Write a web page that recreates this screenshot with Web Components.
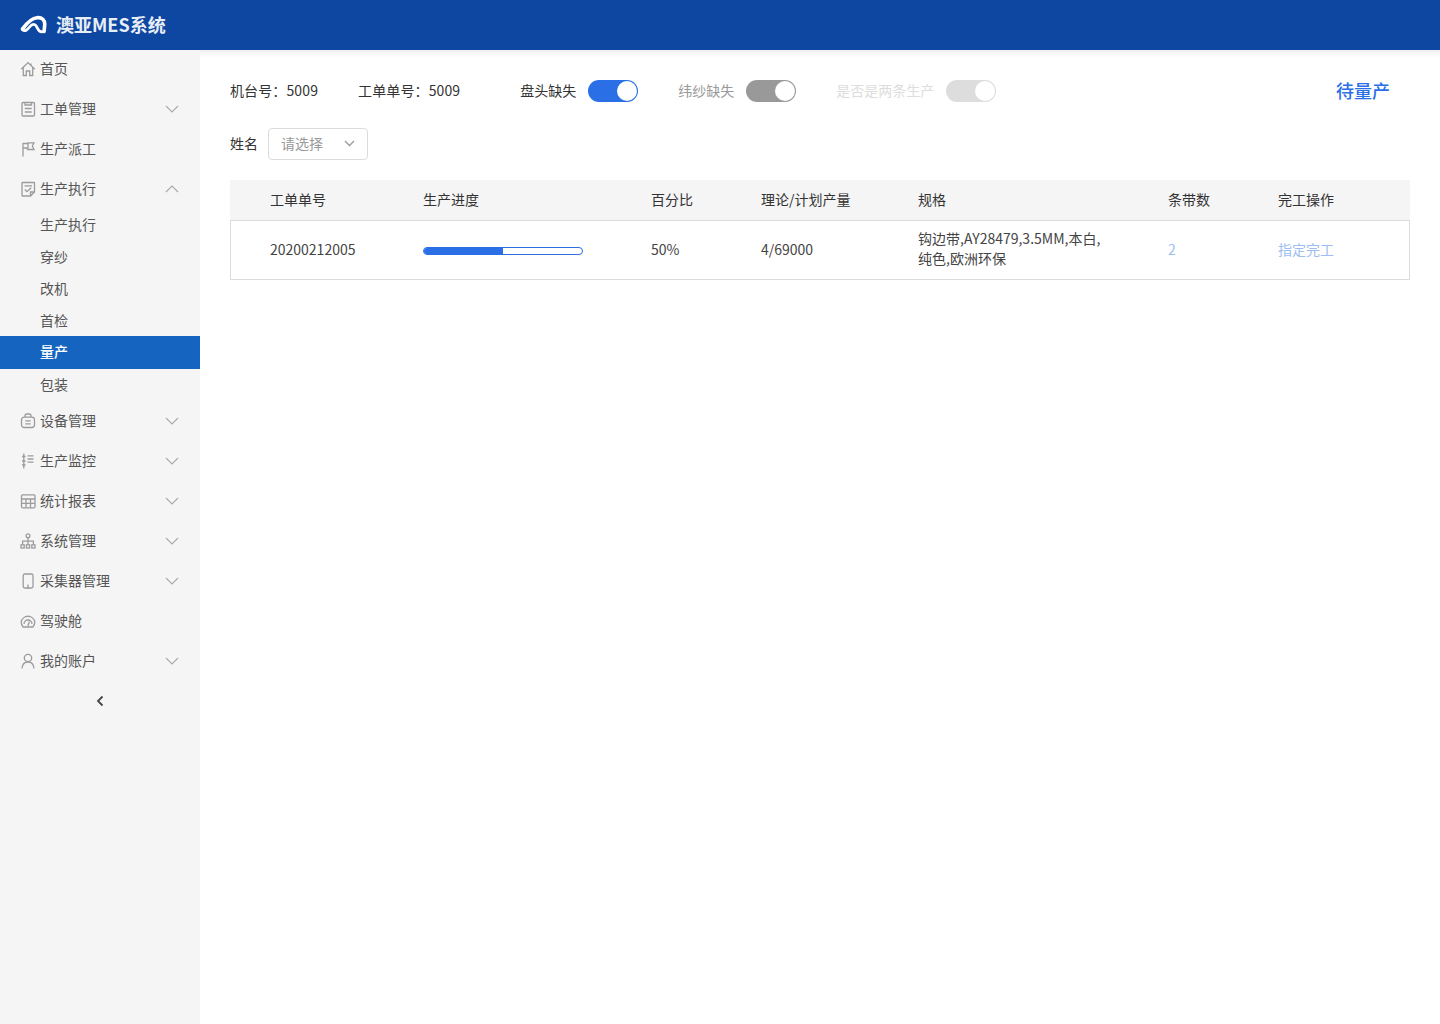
<!DOCTYPE html>
<html lang="zh">
<head>
<meta charset="utf-8">
<title>澳亚MES系统</title>
<style>
  html, body { margin: 0; height: 100%; }
  body { font-family: "Noto Sans CJK SC", "Noto Sans", sans-serif; font-size: 14px; color: #333; background: #fff; }
</style>
</head>
<body>
<mes-app>
  <mes-header slot="header"></mes-header>
  <mes-sidebar slot="sidebar"></mes-sidebar>
  <mes-toolbar></mes-toolbar>
  <mes-name-filter></mes-name-filter>
  <mes-table></mes-table>
</mes-app>

<script>
const ICONS = {
  home: '<path d="M1.2 8.2 8 1.600 14.800 8.200"/><path d="M11 2.500V4.200M3.300 6.500V14.500H6.300V10H9.700V14.500H12.700V6.500"/>',
  order: '<rect x="2" y="1.500" width="12.500" height="13.500" rx="1"/><path d="M5 1.500V4H11.500V1.500M4.800 7.500H11.700M4.800 11H11.700"/>',
  flag: '<path d="M3 15.500V2"/><path d="M3 2.500H8V1.800H14L12.300 5L14 8.500H7.500V7H3"/><path d="M8 2.500V7"/>',
  exec: '<path d="M10.500 15H2.500A.5.5 0 0 1 2 14.500V2A.5.5 0 0 1 2.500 1.500H14A.5.5 0 0 1 14.500 2V11L10.500 15ZM14.500 11H10.500V15"/><path d="M4.500 4.800H12M4.800 8.500L7 10.700L11.200 6.800"/>',
  device: '<rect x="1.500" y="4.200" width="13" height="10.300" rx="2.800"/><path d="M5 4.200V2.800C5 1.800 5.800 1 6.600 1H9.400C10.200 1 11 1.800 11 2.800V4.200M5.300 7.800H10.700M5.300 10.800H10.700"/>',
  monitor: '<path d="M3.800 .5V15.500M2 3.500H5.600M2 8H5.600M2 12H5.600M7.500 2.800H13.500M7.500 6H13.500M7.500 9.200H13.500"/>',
  report: '<rect x="1.500" y="1.800" width="13.500" height="13" rx="1"/><path d="M1.500 6H15M1.500 10.400H15M6 6V14.800M10.500 6V14.800"/>',
  org: '<circle cx="8" cy="2.800" r="1.900"/><rect x="1" y="11.800" width="3.200" height="3.200"/><rect x="6.400" y="11.800" width="3.200" height="3.200"/><rect x="11.800" y="11.800" width="3.200" height="3.200"/><path d="M8 4.700V11.800M2.600 11.800V8.200H13.400V11.800"/>',
  collector: '<rect x="3.200" y="1" width="9.800" height="14" rx="1.500"/><path d="M8 11.500V16"/>',
  gauge: '<path d="M3.200 14A6.900 6.900 0 0 1 1.200 9 6.900 6.900 0 0 1 14.800 9 6.900 6.900 0 0 1 12.800 14Z"/><path d="M4 11A4 4 0 0 1 12 11M7.800 13L9.500 8.500"/>',
  user: '<circle cx="8" cy="5" r="3.700"/><path d="M2 15.500C2.300 11.500 4.800 9 8 9S13.700 11.500 14 15.500"/>'
};

class MesHeader extends HTMLElement {
  connectedCallback() {
    this.attachShadow({ mode: 'open' });
    this.shadowRoot.innerHTML = `
      <style>
        :host {
          display: flex;
          align-items: center;
          height: 50px;
          background: #0d47a1;
          padding-left: 20px;
          color: #fff;
        }
        svg { width: 27px; height: 20px; margin-right: 9px; fill: none; stroke: #fff; stroke-width: 3.600; stroke-linecap: round; }
        span { font-size: 18px; font-weight: 700; color: #e8edf6; padding-bottom: 2px; }
      </style>
      <svg viewBox="0 0 27 20" aria-hidden="true">
        <path d="M2.500 14C5.500 10 10 3.500 17 2.700C22 2.200 25 5 24.700 10C24.500 12 24.300 14.500 24 16.500"/>
        <path d="M2.500 14.500C5 17.500 8 14 10 11.500C12 9 15 8.500 16.500 11.500C18 14.500 19.500 18 24 16.500" stroke-width="2.800"/>
      </svg>
      <span>澳亚MES系统</span>
    `;
  }
}
customElements.define('mes-header', MesHeader);

class MesNavItem extends HTMLElement {
  connectedCallback() {
    const icon = this.getAttribute('icon');
    const arrow = this.getAttribute('arrow');
    this.attachShadow({ mode: 'open' });
    this.shadowRoot.innerHTML = `
      <style>
        :host {
          display: flex;
          align-items: center;
          height: 40px;
          padding-left: 20px;
          font-size: 14px;
          color: #555;
        }
        .ico { width: 16px; height: 16px; margin-right: 4px; fill: none; stroke: #9c9c9c; stroke-width: 1.300; flex: none; }
        .label { flex: 1; padding-bottom: 2px; }
        .arrow { width: 14px; height: 8px; margin-right: 21px; fill: none; stroke: #a9a9a9; stroke-width: 1.100; }
      </style>
      <svg class="ico" viewBox="0 0 16 16">${ICONS[icon]}</svg>
      <span class="label"><slot></slot></span>
      ${arrow ? `<svg class="arrow" viewBox="0 0 14 8"><path d="${arrow === 'up' ? 'M1 7L7 1L13 7' : 'M1 1L7 7L13 1'}"/></svg>` : ''}
    `;
  }
}
customElements.define('mes-nav-item', MesNavItem);

class MesNavSub extends HTMLElement {
  connectedCallback() {
    this.attachShadow({ mode: 'open' });
    this.shadowRoot.innerHTML = `
      <style>
        :host {
          display: flex;
          align-items: center;
          box-sizing: border-box;
          height: 32px;
          padding-left: 40px;
          font-size: 14px;
          color: #555;
        }
        :host(:last-child) { padding-bottom: 2px; }
        :host([active]) { background: #1565c0; color: #fff; font-weight: 500; height: 33px; padding-bottom: 3px; }
      </style>
      <slot></slot>
    `;
  }
}
customElements.define('mes-nav-sub', MesNavSub);

class MesSidebar extends HTMLElement {
  connectedCallback() {
    this.attachShadow({ mode: 'open' });
    this.shadowRoot.innerHTML = `
      <style>
        :host {
          display: flex;
          flex-direction: column;
          width: 200px;
          background: #f5f5f5;
        }
        .upper { margin-top: -1px; }
        .subs { display: flex; flex-direction: column; margin-top: -1px; }
        .collapse { display: flex; justify-content: center; align-items: center; height: 40px; }
        .collapse svg { width: 8px; height: 12px; fill: none; stroke: #444; stroke-width: 1.800; }
      </style>
      <div class="upper">
        <mes-nav-item icon="home">首页</mes-nav-item>
        <mes-nav-item icon="order" arrow="down">工单管理</mes-nav-item>
        <mes-nav-item icon="flag">生产派工</mes-nav-item>
        <mes-nav-item icon="exec" arrow="up">生产执行</mes-nav-item>
      </div>
      <div class="subs">
        <mes-nav-sub>生产执行</mes-nav-sub>
        <mes-nav-sub>穿纱</mes-nav-sub>
        <mes-nav-sub>改机</mes-nav-sub>
        <mes-nav-sub>首检</mes-nav-sub>
        <mes-nav-sub active>量产</mes-nav-sub>
        <mes-nav-sub>包装</mes-nav-sub>
      </div>
      <div>
        <mes-nav-item icon="device" arrow="down">设备管理</mes-nav-item>
        <mes-nav-item icon="monitor" arrow="down">生产监控</mes-nav-item>
        <mes-nav-item icon="report" arrow="down">统计报表</mes-nav-item>
        <mes-nav-item icon="org" arrow="down">系统管理</mes-nav-item>
        <mes-nav-item icon="collector" arrow="down">采集器管理</mes-nav-item>
        <mes-nav-item icon="gauge">驾驶舱</mes-nav-item>
        <mes-nav-item icon="user" arrow="down">我的账户</mes-nav-item>
      </div>
      <div class="collapse"><svg viewBox="0 0 8 12"><path d="M6.500 1.500L2 6L6.500 10.500"/></svg></div>
    `;
  }
}
customElements.define('mes-sidebar', MesSidebar);

class MesSwitch extends HTMLElement {
  connectedCallback() {
    this.attachShadow({ mode: 'open' });
    this.shadowRoot.innerHTML = `
      <style>
        :host {
          display: block;
          position: relative;
          box-sizing: border-box;
          width: 50px;
          height: 22px;
          border-radius: 11px;
          background: var(--switch-color, #2a6fe6);
        }
        i {
          position: absolute;
          right: 1px;
          top: 1px;
          width: 20px;
          height: 20px;
          border-radius: 50%;
          background: #fff;
        }
      </style>
      <i></i>
    `;
  }
}
customElements.define('mes-switch', MesSwitch);

class MesToolbar extends HTMLElement {
  connectedCallback() {
    this.attachShadow({ mode: 'open' });
    this.shadowRoot.innerHTML = `
      <style>
        :host {
          display: flex;
          align-items: center;
          height: 22px;
          font-size: 14px;
          color: #333;
        }
        .txt { padding-bottom: 2px; }
        .info { margin-right: 40px; white-space: nowrap; letter-spacing: .12px; }
        .info + .info { margin-right: 60px; }
        .opt { display: flex; align-items: center; gap: 12px; margin-right: 40px; white-space: nowrap; }
        .opt.grey { color: #999; --switch-color: #999; }
        .opt.light { color: #ddd; --switch-color: #ddd; }
        .status { margin-left: auto; margin-right: 20px; font-size: 18px; color: #2a6fe6; font-weight: 500; }
      </style>
      <span class="info txt">机台号：5009</span>
      <span class="info txt">工单单号：5009</span>
      <span class="opt"><span class="txt">盘头缺失</span><mes-switch></mes-switch></span>
      <span class="opt grey"><span class="txt">纬纱缺失</span><mes-switch></mes-switch></span>
      <span class="opt light"><span class="txt">是否是两条生产</span><mes-switch></mes-switch></span>
      <span class="status txt">待量产</span>
    `;
  }
}
customElements.define('mes-toolbar', MesToolbar);

class MesNameFilter extends HTMLElement {
  connectedCallback() {
    this.attachShadow({ mode: 'open' });
    this.shadowRoot.innerHTML = `
      <style>
        :host {
          display: flex;
          align-items: center;
          gap: 10px;
          margin-top: 26px;
          font-size: 14px;
          color: #333;
        }
        .txt { padding-bottom: 3px; }
        .select {
          box-sizing: border-box;
          display: flex;
          align-items: center;
          justify-content: space-between;
          width: 100px;
          height: 32px;
          padding: 0 12px;
          border: 1px solid #dcdcdc;
          border-radius: 4px;
          color: #999;
        }
        svg { width: 11px; height: 7px; margin-bottom: 2px; fill: none; stroke: #999; stroke-width: 1.300; }
      </style>
      <span class="txt">姓名</span>
      <div class="select"><span class="txt">请选择</span><svg viewBox="0 0 11 7"><path d="M1 1L5.500 5.500L10 1"/></svg></div>
    `;
  }
}
customElements.define('mes-name-filter', MesNameFilter);

class MesTable extends HTMLElement {
  connectedCallback() {
    this.attachShadow({ mode: 'open' });
    this.shadowRoot.innerHTML = `
      <style>
        :host { display: block; margin-top: 20px; font-size: 14px; color: #333; }
        .row {
          display: grid;
          grid-template-columns: 153px 228px 110px 157px 250px 110px 1fr;
          align-items: center;
          padding-left: 40px;
          box-sizing: border-box;
        }
        .head { height: 41px; padding-bottom: 2px; background: #f5f5f5; border-bottom: 1px solid #dcdcdc; }
        .body { height: 59px; padding-left: 39px; padding-bottom: 2px; border: 1px solid #dcdcdc; border-top: none; color: #444; }
        .spec { line-height: 20px; width: 190px; margin-bottom: 2px; }
        .link { color: #9dbdf0; }
        .bar {
          box-sizing: border-box;
          width: 160px;
          height: 8px;
          margin-top: 4px;
          border: 1px solid #2a6fe6;
          border-radius: 4px;
          overflow: hidden;
          background: #fff;
        }
        .bar i { display: block; width: 50%; height: 100%; background: #2a6fe6; }
      </style>
      <div class="row head">
        <span>工单单号</span><span>生产进度</span><span>百分比</span><span>理论/计划产量</span><span>规格</span><span>条带数</span><span>完工操作</span>
      </div>
      <div class="row body">
        <span>20200212005</span>
        <div class="bar"><i></i></div>
        <span>50%</span>
        <span>4/69000</span>
        <span class="spec">钩边带,AY28479,3.5MM,本白,纯色,欧洲环保</span>
        <span class="link">2</span>
        <span class="link">指定完工</span>
      </div>
    `;
  }
}
customElements.define('mes-table', MesTable);

class MesApp extends HTMLElement {
  connectedCallback() {
    this.attachShadow({ mode: 'open' });
    this.shadowRoot.innerHTML = `
      <style>
        :host {
          display: grid;
          grid-template-columns: 200px 1fr;
          grid-template-rows: 50px 1fr;
          height: 1024px;
        }
        .top { grid-column: 1 / 3; }
        .side { display: flex; background: #f5f5f5; }
        main { padding: 30px 30px 0; min-width: 0; box-shadow: inset 0 8px 8px -8px rgba(0,0,0,.14); }
      </style>
      <div class="top"><slot name="header"></slot></div>
      <div class="side"><slot name="sidebar"></slot></div>
      <main><slot></slot></main>
    `;
  }
}
customElements.define('mes-app', MesApp);
</script>
</body>
</html>
